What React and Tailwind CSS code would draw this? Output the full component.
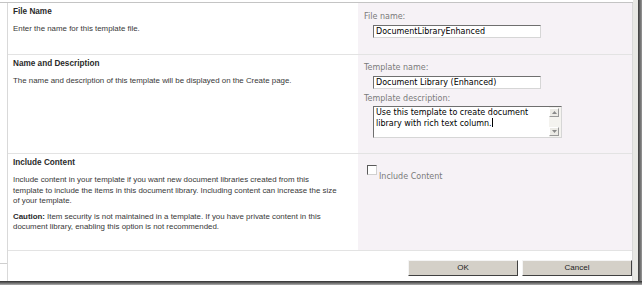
import React from "react";

const leftFont = { fontFamily: '"Liberation Sans", Arial, sans-serif' };

function SideCell({ title, children }) {
  return (
    <div className="w-[350px] pl-[5px] pt-[4px] text-[7.9px] leading-[10.5px] text-[#383838] whitespace-nowrap" style={leftFont}>
      <div className="font-bold text-[8.2px] leading-[10px] text-[#2a2a2a]">{title}</div>
      <div className="mt-[7px]">{children}</div>
    </div>
  );
}

function Input({ value }) {
  return (
    <div className="ml-[9px] w-[168px] h-[13px] bg-white border border-t-[#6f6f6f] border-l-[#6f6f6f] border-r-[#d6d6d6] border-b-[#d6d6d6] pl-[2px] text-[8px] leading-[11px] text-black">
      {value}
    </div>
  );
}

function ScrollArrow({ up }) {
  return (
    <div className="w-[10px] h-[9px] bg-[#ecebe6] border border-t-white border-l-white border-r-[#9a9a9a] border-b-[#9a9a9a] flex items-center justify-center">
      <svg width="5" height="3" viewBox="0 0 5 3">
        <path d={up ? "M0 3 L2.5 0 L5 3 Z" : "M0 0 L2.5 3 L5 0 Z"} fill="#8a8a8a" />
      </svg>
    </div>
  );
}

function Button({ label }) {
  return (
    <div className="w-[110px] h-[16px] bg-[#d4d0c8] border border-t-[#f4f4f4] border-l-[#f4f4f4] border-r-[#404040] border-b-[#404040] flex items-center justify-center text-[8px] text-[#222]" style={leftFont}>
      {label}
    </div>
  );
}

export default function App() {
  return (
    <div className="w-[644px] h-[287px] bg-white flex flex-col overflow-hidden">
      <div className="flex h-[281px]">
        <div className="w-[633px] flex flex-col">
          <div className="h-[2px]" />
          <div className="border-t border-[#c4c4c4]" />
          <div className="flex flex-1">
            <div className="w-[7px] flex flex-col">
              <div className="h-[260px]" />
              <div className="border-t border-[#cfcfcf]" />
            </div>
            <div className="flex-1 border-l border-r border-[#d9d9d9] flex flex-col" style={{ fontFamily: '"DejaVu Sans", Verdana, sans-serif' }}>
              <div className="flex h-[52px] border-b border-[#e3e3e3]">
                <SideCell title="File Name">Enter the name for this template file.</SideCell>
                <div className="flex-1 bg-[#f6f2f6] pt-[9px] pl-[6px]">
                  <div className="text-[8px] leading-[10px] text-[#7a7a7a] mb-[3px]">File name:</div>
                  <Input value="DocumentLibraryEnhanced" />
                </div>
              </div>
              <div className="flex h-[99px] border-b border-[#e3e3e3]">
                <SideCell title="Name and Description">
                  The name and description of this template will be displayed on the Create page.
                </SideCell>
                <div className="flex-1 bg-[#f6f2f6] pt-[8px] pl-[6px]">
                  <div className="text-[8px] leading-[10px] text-[#7a7a7a] mb-[3px]">Template name:</div>
                  <Input value="Document Library (Enhanced)" />
                  <div className="text-[8px] leading-[10px] text-[#7a7a7a] mt-[5px] mb-[2px]">Template description:</div>
                  <div className="ml-[9px] w-[189px] h-[32px] bg-white border border-t-[#6f6f6f] border-l-[#6f6f6f] border-r-[#d6d6d6] border-b-[#d6d6d6] flex">
                    <div className="flex-1 pl-[2px] pt-[1px] text-[8px] leading-[10px] text-black">
                      <div>Use this template to create document</div>
                      <div>
                        library with rich text column.<span className="inline-block w-[1px] h-[9px] bg-black align-[-1px]" />
                      </div>
                    </div>
                    <div className="w-[12px] bg-[#f4f3ef] flex flex-col justify-between py-[1px]">
                      <ScrollArrow up />
                      <ScrollArrow />
                    </div>
                  </div>
                </div>
              </div>
              <div className="flex h-[97px] border-b border-[#e3e3e3]">
                <SideCell title="Include Content">
                  <div>Include content in your template if you want new document libraries created from this</div>
                  <div>template to include the items in this document library. Including content can increase the size</div>
                  <div>of your template.</div>
                  <div className="mt-[5px] flex gap-[2px]">
                    <b className="text-[#2a2a2a]">Caution:</b>
                    <span>Item security is not maintained in a template. If you have private content in this</span>
                  </div>
                  <div>document library, enabling this option is not recommended.</div>
                </SideCell>
                <div className="flex-1 bg-[#f6f2f6] pt-[11px] pl-[9px] flex items-start gap-[2px]">
                  <div className="w-[10px] h-[10px] bg-white border border-t-[#5a5a5a] border-l-[#5a5a5a] border-r-[#d0d0d0] border-b-[#d0d0d0]" />
                  <div className="mt-[7px] text-[8px] leading-[10px] text-[#7a7a7a]">Include Content</div>
                </div>
              </div>
              <div className="flex-1 bg-white flex justify-end items-start pt-[9px] gap-[4px]">
                <Button label="OK" />
                <Button label="Cancel" />
              </div>
            </div>
          </div>
        </div>
        <div className="w-[5px] bg-[#e8e8e4]" />
        <div className="w-[4px] bg-gradient-to-r from-[#3c3c3c] to-[#9a9a9a]" />
      </div>
      <div className="h-[4px] w-[642px] bg-gradient-to-b from-[#2e2e2e] to-[#b0b0b0]" />
    </div>
  );
}
